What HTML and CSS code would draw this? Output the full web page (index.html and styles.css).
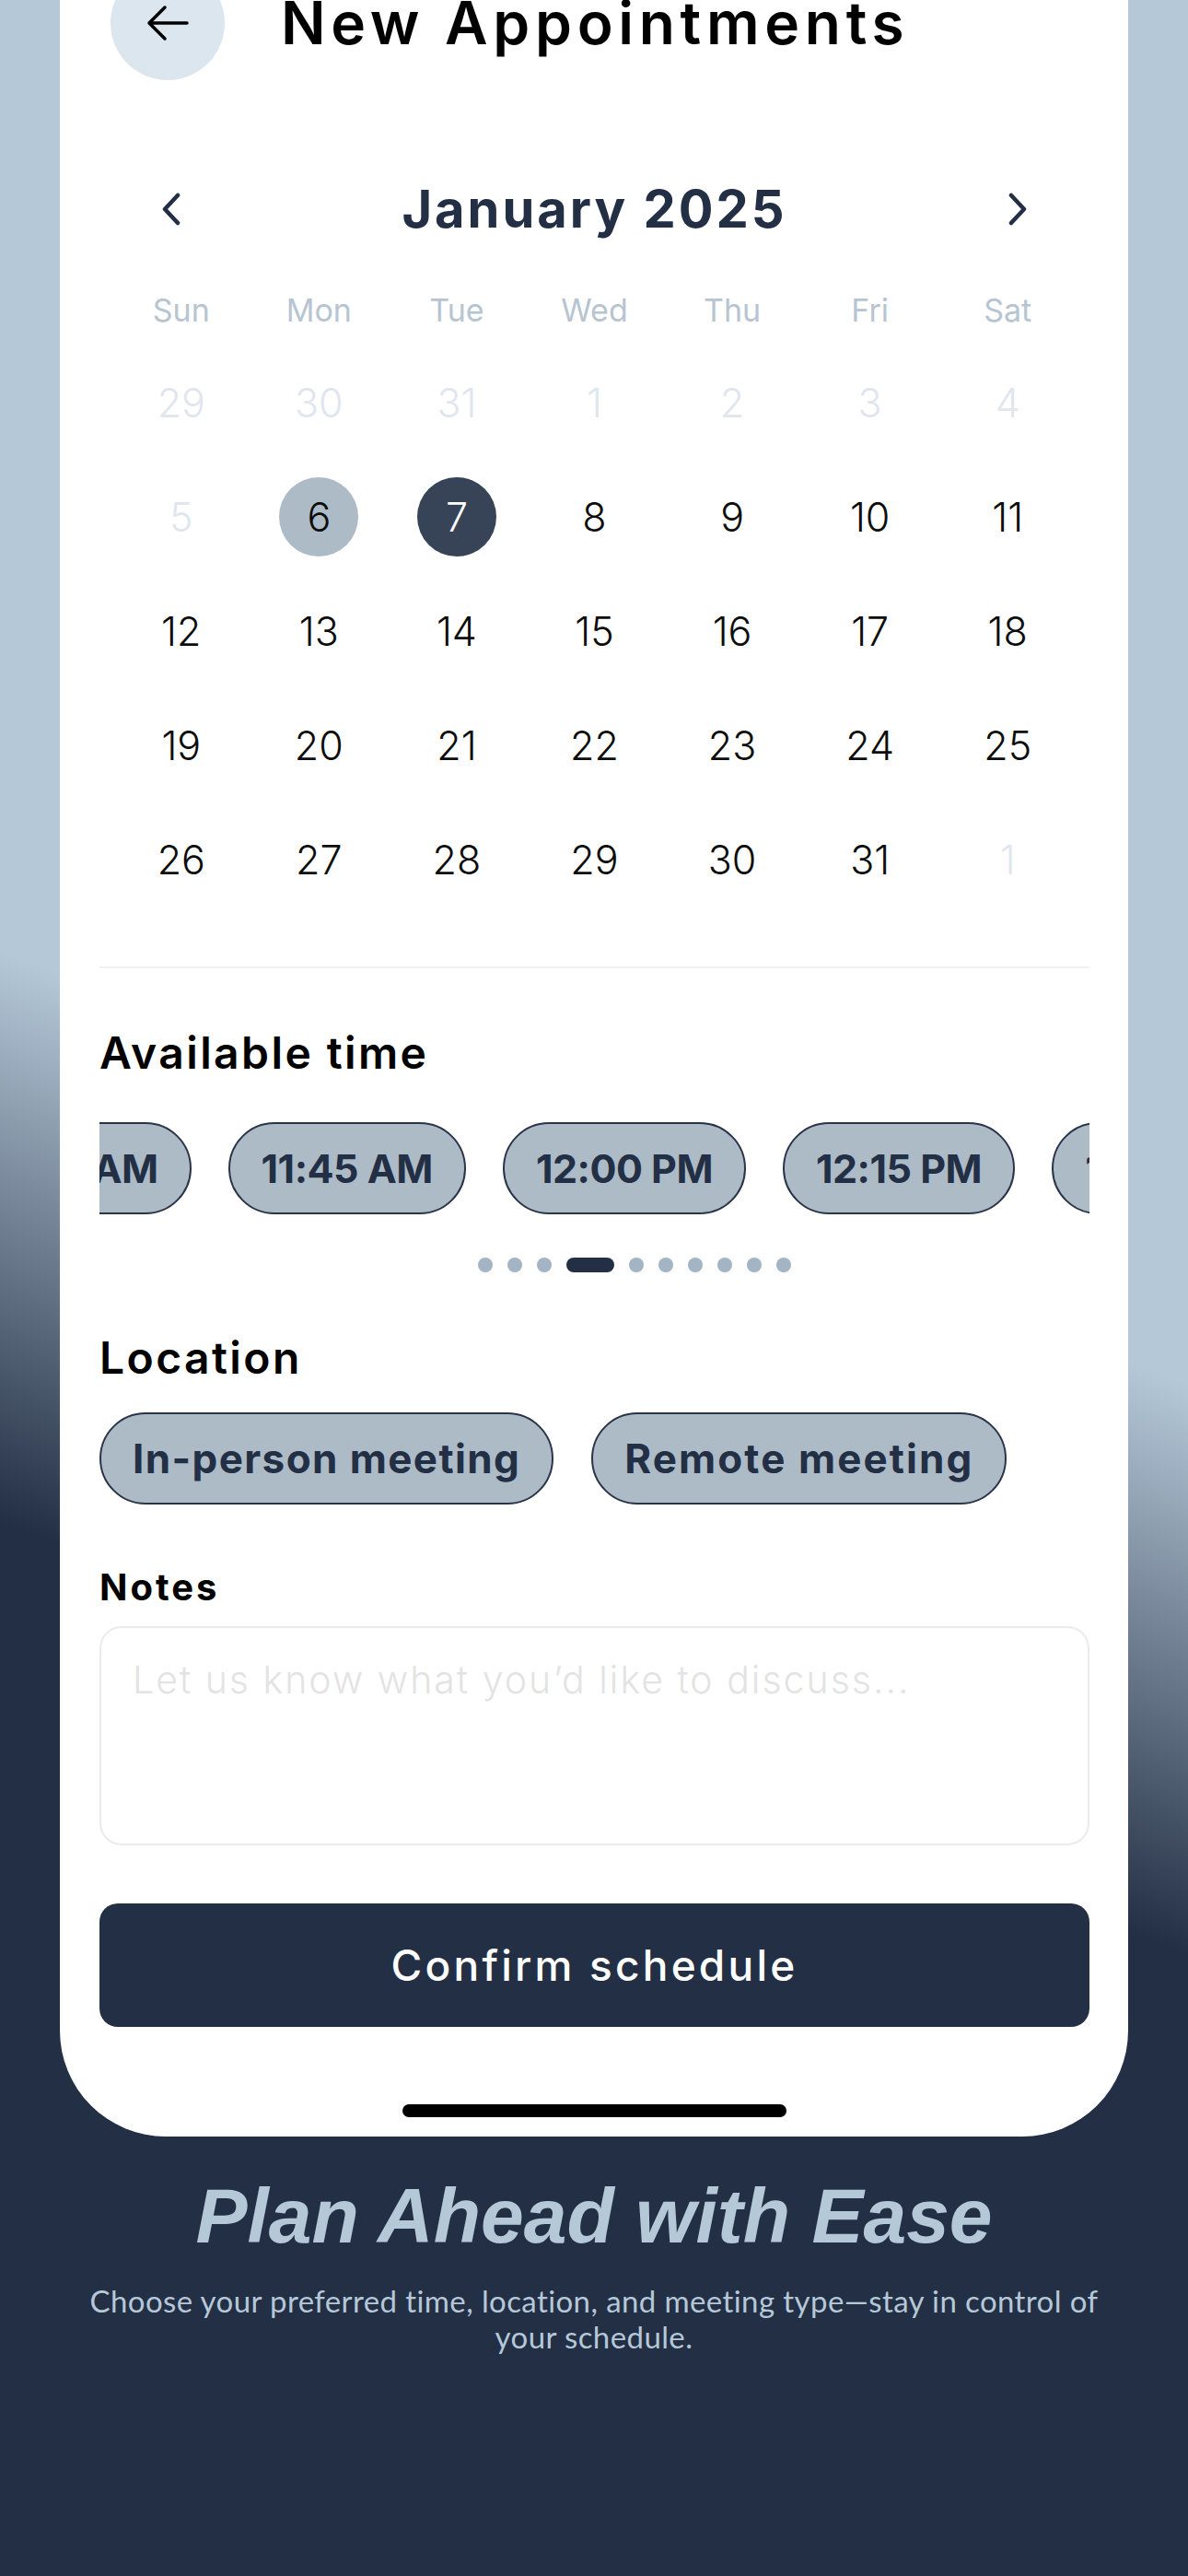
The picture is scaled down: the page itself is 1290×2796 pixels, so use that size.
FILE: index.html
```html
<!DOCTYPE html>
<html lang="en">
<head>
    <meta charset="UTF-8">
    <meta name="viewport" content="width=device-width, initial-scale=1.0">
    <title>New Appointments</title>
    <link rel="stylesheet" href="styles.css">
</head>
<body>
<div class="screen">
    <div class="sheet">
        <div class="topbar">
            <button class="back-btn" aria-label="Back">
                <svg width="46" height="40" viewBox="0 0 46 40" fill="none" stroke="#000" stroke-width="3.5" stroke-linecap="round" stroke-linejoin="round">
                    <path d="M44 20H3M20 3L3 20l17 17"/>
                </svg>
            </button>
            <h1 class="page-title">New Appointments</h1>
        </div>

        <div class="month-nav">
            <svg class="chevron" width="22" height="36" viewBox="0 0 22 36" fill="none" stroke="#232f44" stroke-width="4.5" stroke-linecap="round" stroke-linejoin="round">
                <path d="M18 3L4 18l14 15"/>
            </svg>
            <div class="month-label">January 2025</div>
            <svg class="chevron" width="22" height="36" viewBox="0 0 22 36" fill="none" stroke="#232f44" stroke-width="4.5" stroke-linecap="round" stroke-linejoin="round">
                <path d="M4 3l14 15L4 33"/>
            </svg>
        </div>

        <div class="calendar">
            <div class="weekdays">
                <span>Sun</span><span>Mon</span><span>Tue</span><span>Wed</span><span>Thu</span><span>Fri</span><span>Sat</span>
            </div>
            <div class="days">
                <div class="day muted"><span>29</span></div>
                <div class="day muted"><span>30</span></div>
                <div class="day muted"><span>31</span></div>
                <div class="day muted"><span>1</span></div>
                <div class="day muted"><span>2</span></div>
                <div class="day muted"><span>3</span></div>
                <div class="day muted"><span>4</span></div>

                <div class="day muted"><span>5</span></div>
                <div class="day today"><span>6</span></div>
                <div class="day selected"><span>7</span></div>
                <div class="day"><span>8</span></div>
                <div class="day"><span>9</span></div>
                <div class="day"><span>10</span></div>
                <div class="day"><span>11</span></div>

                <div class="day"><span>12</span></div>
                <div class="day"><span>13</span></div>
                <div class="day"><span>14</span></div>
                <div class="day"><span>15</span></div>
                <div class="day"><span>16</span></div>
                <div class="day"><span>17</span></div>
                <div class="day"><span>18</span></div>

                <div class="day"><span>19</span></div>
                <div class="day"><span>20</span></div>
                <div class="day"><span>21</span></div>
                <div class="day"><span>22</span></div>
                <div class="day"><span>23</span></div>
                <div class="day"><span>24</span></div>
                <div class="day"><span>25</span></div>

                <div class="day"><span>26</span></div>
                <div class="day"><span>27</span></div>
                <div class="day"><span>28</span></div>
                <div class="day"><span>29</span></div>
                <div class="day"><span>30</span></div>
                <div class="day"><span>31</span></div>
                <div class="day muted"><span>1</span></div>
            </div>
        </div>

        <div class="divider"></div>

        <h2 class="section-title">Available time</h2>
        <div class="time-scroller">
            <div class="time-track">
                <span class="chip">11:30 AM</span>
                <span class="chip">11:45 AM</span>
                <span class="chip">12:00 PM</span>
                <span class="chip">12:15 PM</span>
                <span class="chip">12:30 PM</span>
                <span class="chip">12:45 PM</span>
            </div>
        </div>
        <div class="pager">
            <span class="dot"></span><span class="dot"></span><span class="dot"></span>
            <span class="dot active"></span>
            <span class="dot"></span><span class="dot"></span><span class="dot"></span>
            <span class="dot"></span><span class="dot"></span><span class="dot"></span>
        </div>

        <h2 class="section-title location-title">Location</h2>
        <div class="location-options">
            <span class="chip">In-person meeting</span>
            <span class="chip chip-wide">Remote meeting</span>
        </div>

        <h3 class="notes-title">Notes</h3>
        <textarea class="notes" placeholder="Let us know what you’d like to discuss..."></textarea>

        <button class="confirm-btn">Confirm schedule</button>
        <div class="home-indicator"></div>
    </div>

    <div class="promo">
        <h2 class="promo-title">Plan Ahead with Ease</h2>
        <p class="promo-text">Choose your preferred time, location, and meeting type—stay in control of your schedule.</p>
    </div>
</div>
</body>
</html>
```

FILE: styles.css
```css
* {
    box-sizing: border-box;
}
body {
    margin: 0;
    background: #232f44;
    font-family: Inter, "Noto Sans", sans-serif;
}
.screen {
    width: 1290px;
    height: 2796px;
    overflow: hidden;
    background: linear-gradient(200deg, #b5c8d8 46%, #232f44 65%);
}

/* white phone sheet */
.sheet {
    width: 1160px;
    margin: 0 65px;
    padding: 0 42px 21px 43px;
    background: #fff;
    border-radius: 0 0 115px 115px;
    display: flex;
    flex-direction: column;
}
.topbar {
    display: flex;
    align-items: center;
    gap: 61px;
    margin-top: -37px;
    padding-left: 12px;
}
.back-btn {
    width: 124px;
    height: 124px;
    flex-shrink: 0;
    border: 0;
    padding: 0;
    border-radius: 50%;
    background: #dce6ef;
    display: flex;
    align-items: center;
    justify-content: center;
}
.page-title {
    margin: 0;
    font-size: 64px;
    font-weight: 600;
    line-height: 1;
    letter-spacing: 5.7px;
    color: #000;
}

/* calendar */
.month-nav {
    margin-top: 100px;
    height: 80px;
    padding: 0 67px;
    display: flex;
    align-items: center;
    justify-content: space-between;
}
.month-label {
    font-size: 56px;
    font-weight: 700;
    line-height: 1;
    letter-spacing: 3px;
    color: #232f44;
}
.calendar {
    margin-top: 39px;
    padding: 0 14px;
}
.weekdays,
.days {
    display: grid;
    grid-template-columns: repeat(7, 1fr);
}
.weekdays span {
    height: 60px;
    display: flex;
    align-items: center;
    justify-content: center;
    font-size: 34px;
    color: #b7c4d1;
}
.days {
    margin-top: 9px;
    grid-auto-rows: 124px;
}
.day {
    display: flex;
    align-items: center;
    justify-content: center;
    font-size: 43px;
    font-weight: 300;
    color: #0d0d0d;
}
.day span {
    width: 86px;
    height: 86px;
    border-radius: 50%;
    display: flex;
    align-items: center;
    justify-content: center;
}
.day.muted { color: #dfe6ee; }
.day.today span { background: #adbbc7; }
.day.selected span { background: #374357; color: #fff; }

.divider {
    margin-top: 54px;
    height: 2px;
    background: #f0f0f0;
}

/* sections */
.section-title {
    margin: 68px 0 0;
    font-size: 48px;
    font-weight: 600;
    line-height: 1;
    letter-spacing: 2.4px;
    color: #000;
}
.chip {
    height: 100px;
    flex-shrink: 0;
    padding: 0 34px;
    border: 2px solid #2a3549;
    border-radius: 50px;
    background: #adbbc7;
    display: flex;
    align-items: center;
    font-size: 43px;
    font-weight: 700;
    letter-spacing: -0.5px;
    white-space: nowrap;
    color: #232f44;
}
.time-scroller {
    margin-top: 51px;
    overflow: hidden;
}
.time-track {
    display: flex;
    gap: 40px;
    margin-left: -159px;
}
.pager {
    margin-top: 47px;
    padding-left: 86px;
    display: flex;
    justify-content: center;
    gap: 16px;
}
.dot {
    width: 16px;
    height: 16px;
    border-radius: 8px;
    background: #a3b4c4;
}
.dot.active {
    width: 52px;
    background: #232f44;
}
.location-title {
    margin-top: 69px;
}
.location-options {
    margin-top: 35px;
    display: flex;
    gap: 41px;
}
.location-options .chip {
    font-size: 44px;
    letter-spacing: 1.4px;
}
.location-options .chip-wide {
    letter-spacing: 2.1px;
}
.notes-title {
    margin: 70px 0 0;
    font-size: 40px;
    font-weight: 700;
    line-height: 1;
    letter-spacing: 3px;
    color: #000;
}
.notes {
    margin-top: 22px;
    width: 100%;
    height: 238px;
    padding: 32px 34px;
    border: 2px solid #ebebeb;
    border-radius: 24px;
    resize: none;
    font-family: Inter, "Noto Sans", sans-serif;
    font-size: 41px;
    font-weight: 300;
    line-height: 1.2;
    letter-spacing: 2px;
    color: #232f44;
}
.notes::placeholder {
    color: #e3e3e3;
}
.confirm-btn {
    margin-top: 63px;
    height: 134px;
    border: 0;
    border-radius: 20px;
    background: #232f44;
    color: #fff;
    font-family: Inter, "Noto Sans", sans-serif;
    font-size: 46px;
    font-weight: 500;
    letter-spacing: 3.2px;
}
.home-indicator {
    margin-top: 84px;
    align-self: center;
    width: 417px;
    height: 14px;
    border-radius: 7px;
    background: #000;
}

/* caption under the phone */
.promo {
    padding-top: 44px;
    text-align: center;
}
.promo-title {
    margin: 0;
    font-family: "Liberation Sans", Arial, sans-serif;
    font-size: 84px;
    font-weight: 700;
    font-style: italic;
    line-height: 1;
    color: #b5c8d8;
}
.promo-text {
    max-width: 1120px;
    margin: 31px auto 0;
    font-family: Lato, "Noto Sans", sans-serif;
    font-size: 33px;
    line-height: 39px;
    letter-spacing: 0.4px;
    color: #b5c8d8;
}
```
